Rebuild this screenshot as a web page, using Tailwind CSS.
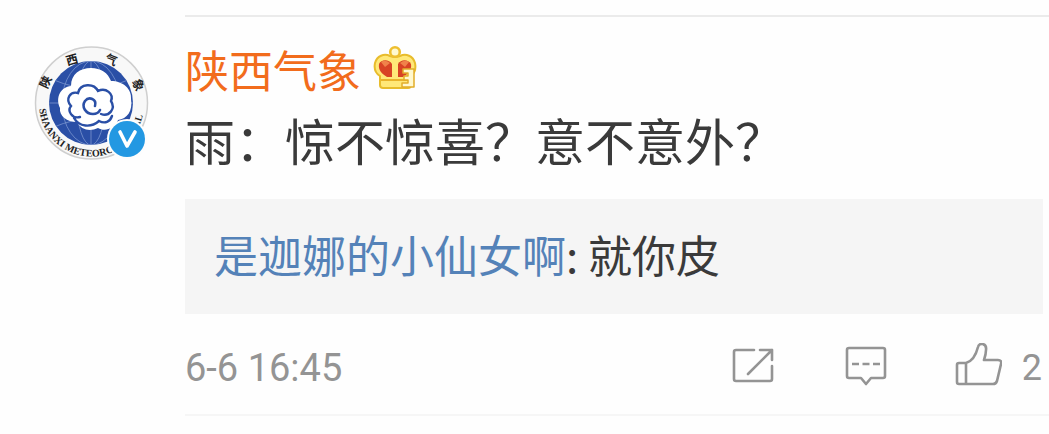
<!DOCTYPE html>
<html lang="zh-CN">
<head>
<meta charset="utf-8">
<meta name="viewport" content="width=device-width, initial-scale=1">
<title>陕西气象</title>
<script src="https://cdn.jsdelivr.net/npm/@tailwindcss/browser@4"></script>
</head>
<body class="bg-[#fefefe] font-['Noto_Sans_CJK_SC',sans-serif] text-[#3a3a3a]">
<article class="flex pt-[15px]">
  <a href="#" aria-label="陕西气象" class="ml-[34px] mt-[30px] mr-[35px] block size-[116px] shrink-0">
    <svg viewBox="0 0 116 116" class="size-full" aria-hidden="true">
      <defs>
        <clipPath id="globe"><circle cx="57" cy="58" r="42"/></clipPath>
        <path id="ring-bottom" d="M5 59A52.500 52.500 0 0 0 110 59"/>
      </defs>
      <circle cx="57.500" cy="58" r="56" fill="#f8f8f8" stroke="#cfcfcf" stroke-width="1.500"/>
      <circle cx="57" cy="58" r="42" fill="#2a4fa6"/>
      <g clip-path="url(#globe)" fill="none" stroke="#7b96cf" stroke-width=".8">
        <path d="M57 16V100M15 58H99M20 35Q57 51 94 35M20 82Q57 66 94 82"/>
        <ellipse cx="57" cy="58" rx="14" ry="42"/>
        <ellipse cx="57" cy="58" rx="29" ry="42"/>
      </g>
      <path d="M37 41C37 29 46 23 57 23C67 23 74 28 77 36C89 36 98 44 97 54C99 66 93 74 84 75C80 84 71 87 64 83C56 87 47 85 43 77C33 77 25 71 26 63C21 52 27 42 37 41Z" fill="#fff"/>
      <path d="M46 72C38 74 33 66 37 61C31 54 36 46 44 48C46 38 60 38 64 46C72 42 80 49 77 56C82 64 75 72 67 69M40 73C45 82 57 83 65 76C71 79 76 77 78 71" fill="none" stroke="#2a4fa6" stroke-width="2.400" stroke-linecap="round"/>
      <path d="M61 61C63 54 55 51 51 56C47 62 52 69 59 69C62 69 65 67 66 65" fill="none" stroke="#2a4fa6" stroke-width="2.600" stroke-linecap="round"/>
      <g font-family="Noto Sans CJK SC, sans-serif" font-size="12" font-weight="700" fill="#222" text-anchor="middle">
        <text transform="translate(12 37) rotate(-65)" y="4">陕</text>
        <text transform="translate(38 15) rotate(-15)" y="4">西</text>
        <text transform="translate(77 15) rotate(22)" y="4">气</text>
        <text transform="translate(104 40) rotate(68)" y="4">象</text>
      </g>
      <text font-family="Liberation Serif, serif" font-size="10" font-weight="700" fill="#222"><textPath href="#ring-bottom" startOffset="5">SHAANXI METEOROLOGICAL</textPath></text>
      <circle cx="93" cy="94" r="20" fill="#fdfdfd"/>
      <circle cx="93" cy="94" r="18" fill="#2398e2"/>
      <path d="M86 87L93 101L101 87" fill="none" stroke="#fff" stroke-width="3.600" stroke-linecap="round" stroke-linejoin="round"/>
    </svg>
  </a>
  <div class="min-w-0 flex-1 border-t-2 border-b-2 border-t-[#ebebeb] border-b-[#f6f6f6] pt-[26px] pb-5">
    <header class="flex items-start gap-3">
      <a href="#" class="text-[44px] leading-[52px] text-[#f26c1c]">陕西气象</a>
      <svg viewBox="0 0 44 46" class="mt-0.5 h-[46px] w-11 shrink-0" role="img" aria-label="会员等级3">
        <path d="M7 31C2 28 1 23 2 18C4 11 11 8 17 11Q22 13 27 11C33 8 40 11 42 18C43 23 42 28 38 31V40Q38 43 35 43H10Q7 43 7 40Z" fill="#ffe878" stroke="#e8bc2c" stroke-width="2" stroke-linejoin="round"/>
        <circle cx="22" cy="7" r="4.800" fill="#fff9d0" stroke="#eebf30" stroke-width="2.600"/>
        <path d="M6 19C8 14 16 14 19 19V32H14C9 29 5 25 6 19Z" fill="#d84324"/>
        <path d="M25 19C28 14 35 14 38 19C39 25 35 29 30 32H25Z" fill="#d84324"/>
        <path d="M8 17Q12 14 17 18L12 22ZM27 18Q32 14 36 17L32 22Z" fill="#f0824a"/>
        <path d="M8 35H36" fill="none" stroke="#e9b32b" stroke-width="2"/>
        <path d="M30 24H41V42H29V38H35V35H31V31H35V28H30Z" fill="#fff8cf" stroke="#e2ad2a" stroke-width="1.500" stroke-linejoin="round"/>
      </svg>
    </header>
    <p class="mt-[14px] text-[50px] leading-[60px]">雨：惊不惊喜？意不意外？</p>
    <blockquote class="mt-[30px] mr-[6px] bg-[#f5f5f5] px-[29px] pt-[27px] pb-[31px] text-[44px] leading-[57px]"><a href="#" class="text-[#5482b8]">是迦娜的小仙女啊</a>: 就你皮</blockquote>
    <footer class="mt-6 mr-[7px] flex h-14 items-center text-[#949494]">
      <time class="mr-auto pt-1 font-[Roboto,sans-serif] text-[38px] leading-[56px]">6-6 16:45</time>
      <button type="button" aria-label="转发" class="mr-[70px]">
        <svg viewBox="0 0 44 46" class="h-[46px] w-11" fill="none" stroke="currentColor" stroke-width="2.600" stroke-linecap="round" stroke-linejoin="round"><path d="M24 7H6Q4 7 4 9V36Q4 38 6 38H40Q42 38 42 36V23M30 7H42V17M42 7L18 31"/></svg>
      </button>
      <button type="button" aria-label="评论" class="mr-[66px]">
        <svg viewBox="0 0 44 46" class="h-[46px] w-11" fill="none" stroke="currentColor" stroke-width="2.600" stroke-linejoin="round"><path d="M5 5H39Q41 5 41 7V33Q41 35 39 35H27L22 41L17 35H5Q3 35 3 33V7Q3 5 5 5Z"/><path d="M8 21H15M18.500 21H25.500M29 21H36"/></svg>
      </button>
      <button type="button" aria-label="赞 2" class="flex items-center gap-5">
        <svg viewBox="0 0 48 46" class="h-[46px] w-12" fill="none" stroke="currentColor" stroke-width="2.600" stroke-linejoin="round"><path d="M12 20C19 18 22 12 24 4C25 -1 33 0 32 7C32 11 31 14 30 17H44Q48 17 47 21L43 38Q42 41 39 41H5Q3 41 3 39V22Q3 20 5 20H12V41"/></svg>
        <span class="pt-1 font-[Roboto,sans-serif] text-[36px] leading-[56px]">2</span>
      </button>
    </footer>
  </div>
</article>
</body>
</html>
